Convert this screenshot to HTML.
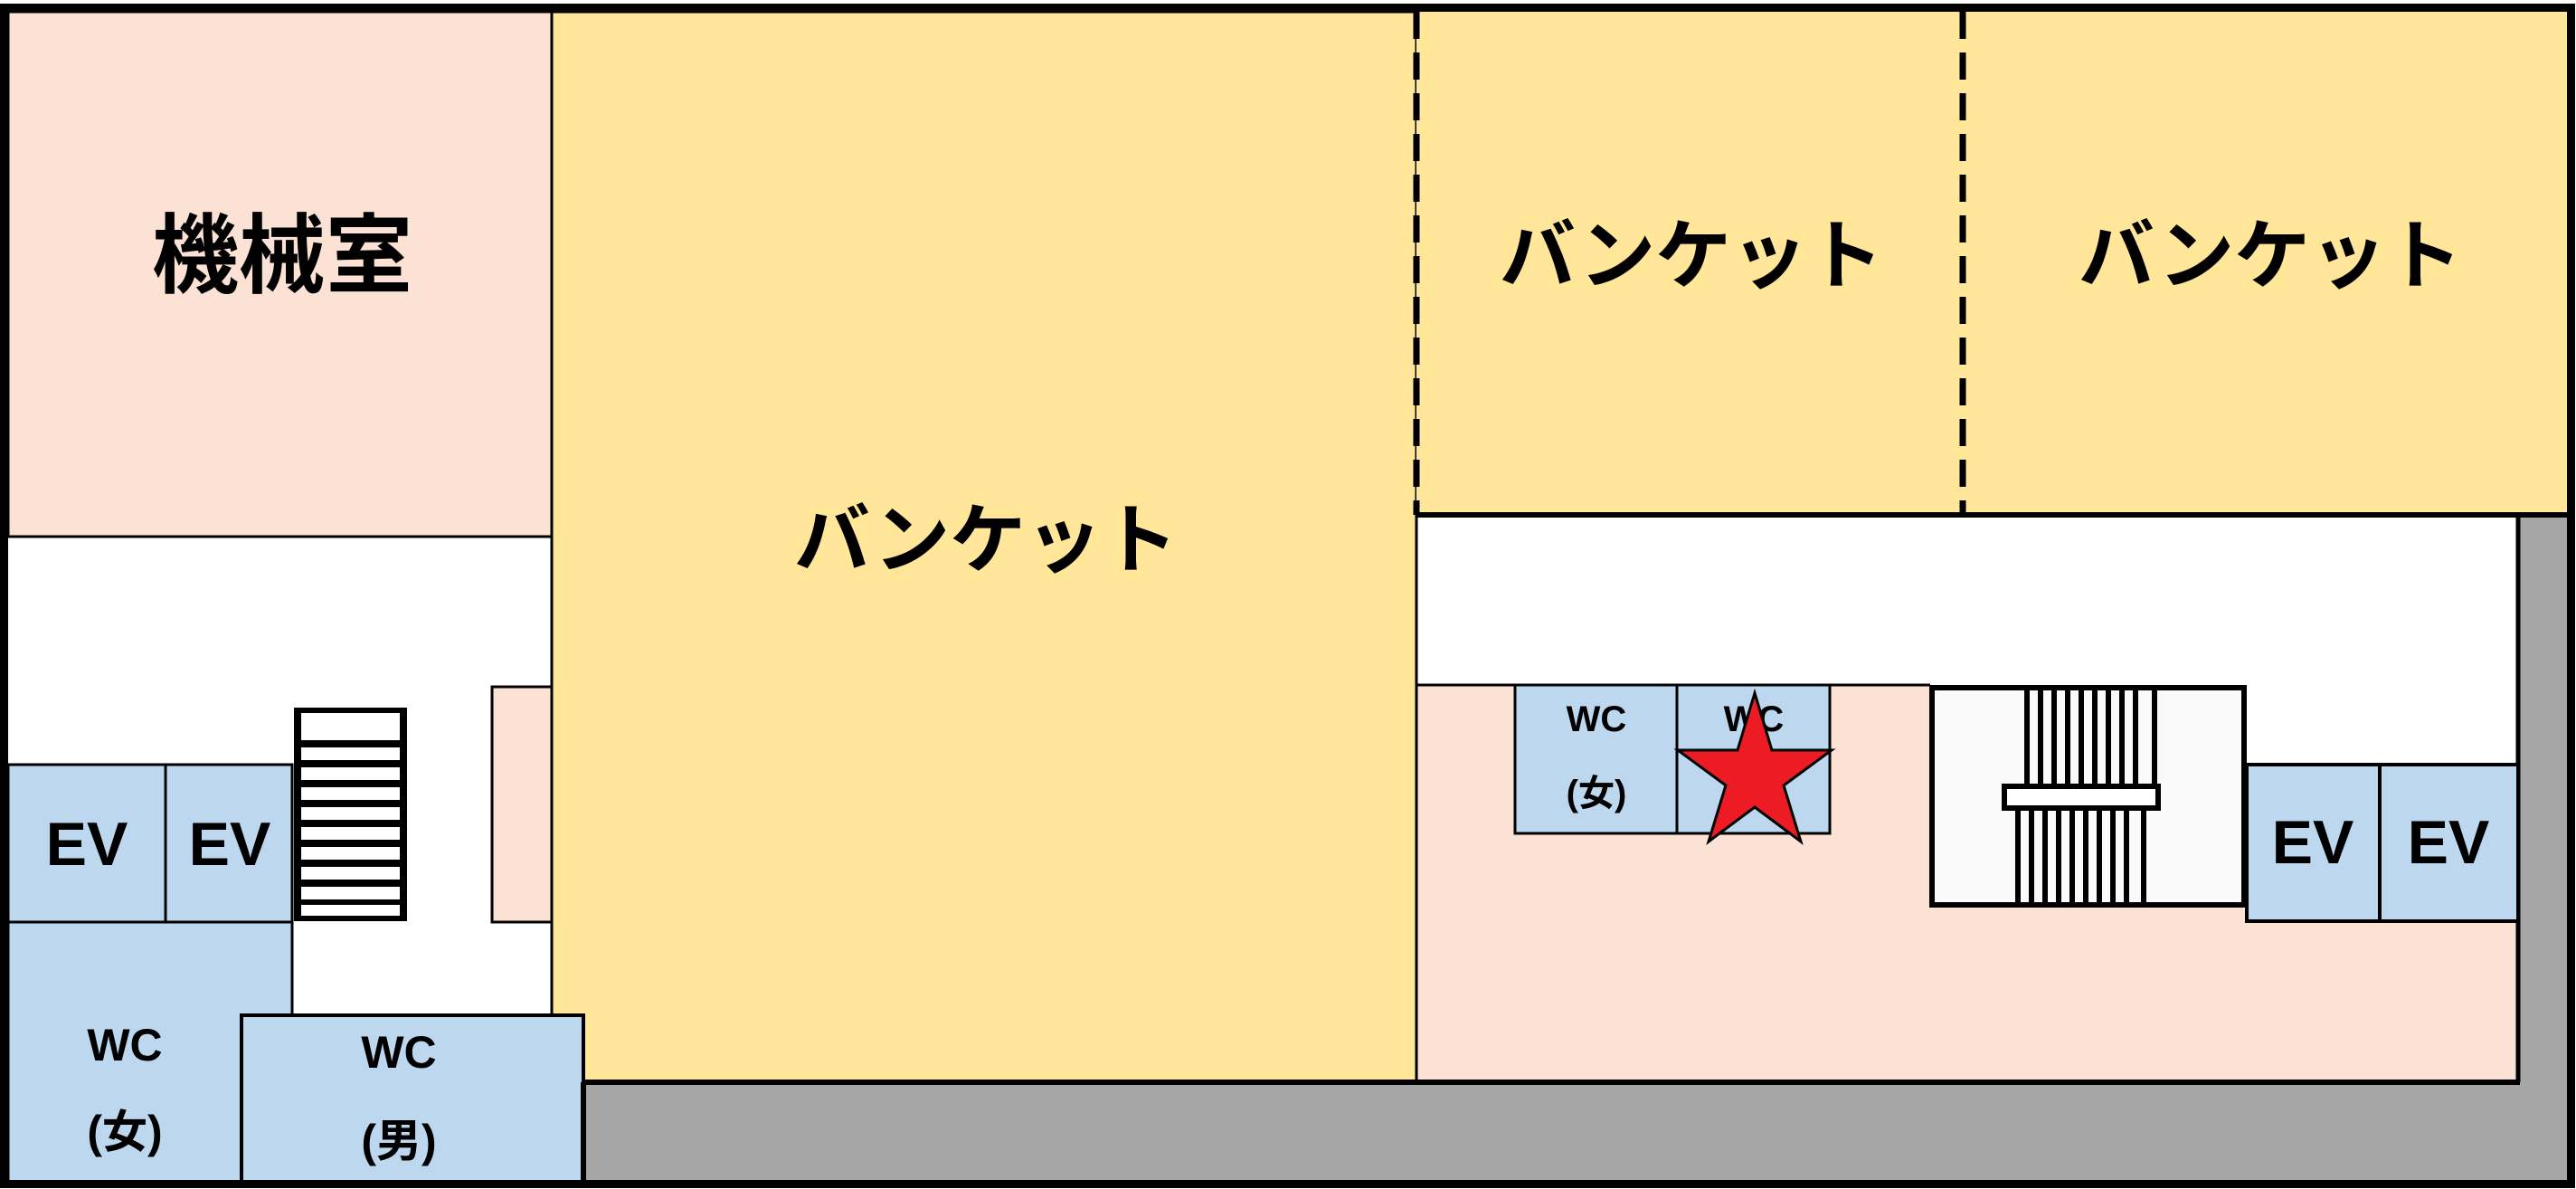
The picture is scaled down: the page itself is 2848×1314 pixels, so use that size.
<!DOCTYPE html>
<html><head><meta charset="utf-8"><style>
html,body{margin:0;padding:0;background:#fff;}
svg{display:block}
text{font-family:"Liberation Sans","Noto Sans CJK JP",sans-serif;font-weight:bold;fill:#000;text-anchor:middle}
</style></head><body>
<svg width="2848" height="1314" viewBox="0 0 2848 1314" xmlns="http://www.w3.org/2000/svg">
<rect x="0" y="0" width="2848" height="1314" fill="#fff"/>
<rect x="645" y="1196" width="2200" height="112" fill="#a6a6a6"/>
<rect x="2784" y="569" width="60" height="740" fill="#a6a6a6"/>
<rect x="9" y="13" width="601" height="580" fill="#fbe2d5" stroke="#000" stroke-width="3"/>
<rect x="610" y="13" width="956" height="1183" fill="#ffe699" stroke="#000" stroke-width="3"/>
<rect x="1566" y="13" width="1274" height="556" fill="#ffe699"/>
<line x1="1566" y1="569" x2="2840" y2="569" stroke="#000" stroke-width="6"/>
<line x1="1566" y1="13" x2="1566" y2="569" stroke="#000" stroke-width="7" stroke-dasharray="30,15"/>
<line x1="2170" y1="13" x2="2170" y2="569" stroke="#000" stroke-width="7" stroke-dasharray="30,15"/>
<!-- right pink -->
<rect x="1566" y="757" width="568" height="439" fill="#fbe2d5"/>
<rect x="2134" y="1000" width="650" height="196" fill="#fbe2d5"/>
<rect x="2134" y="757" width="350" height="243" fill="#fbe2d5"/>
<line x1="1566" y1="757" x2="2134" y2="757" stroke="#000" stroke-width="3"/>
<line x1="2784" y1="569" x2="2784" y2="1196" stroke="#000" stroke-width="5"/>
<line x1="645" y1="1196" x2="2786" y2="1196" stroke="#000" stroke-width="6"/>
<line x1="1566" y1="569" x2="1566" y2="1196" stroke="#000" stroke-width="3"/>
<rect x="1675" y="757" width="179" height="164" fill="#bdd7ee" stroke="#000" stroke-width="3"/>
<rect x="1854" y="757" width="169" height="164" fill="#bdd7ee" stroke="#000" stroke-width="3"/>
<text x="1765" y="808" font-size="40">WC</text>
<text x="1765" y="890" font-size="40">(女)</text>
<text x="1939" y="808" font-size="40">WC</text>
<polygon points="1940,766 1959,829 2025,829 1972,868 1991,930 1940,892 1889,930 1908,868 1855,829 1921,829" fill="#ed1c24" stroke="#000" stroke-width="3"/>
<rect x="2136" y="760" width="345" height="240" fill="#fafafa" stroke="#000" stroke-width="6"/>
<g stroke="#000" stroke-width="6">
<line x1="2241" y1="760" x2="2241" y2="868"/><line x1="2256" y1="760" x2="2256" y2="868"/><line x1="2271" y1="760" x2="2271" y2="868"/><line x1="2286" y1="760" x2="2286" y2="868"/><line x1="2301" y1="760" x2="2301" y2="868"/><line x1="2316" y1="760" x2="2316" y2="868"/><line x1="2331" y1="760" x2="2331" y2="868"/><line x1="2346" y1="760" x2="2346" y2="868"/><line x1="2361" y1="760" x2="2361" y2="868"/><line x1="2382" y1="760" x2="2382" y2="868"/>
<line x1="2231" y1="895" x2="2231" y2="1000"/><line x1="2246" y1="895" x2="2246" y2="1000"/><line x1="2261" y1="895" x2="2261" y2="1000"/><line x1="2276" y1="895" x2="2276" y2="1000"/><line x1="2291" y1="895" x2="2291" y2="1000"/><line x1="2306" y1="895" x2="2306" y2="1000"/><line x1="2321" y1="895" x2="2321" y2="1000"/><line x1="2336" y1="895" x2="2336" y2="1000"/><line x1="2351" y1="895" x2="2351" y2="1000"/><line x1="2370" y1="895" x2="2370" y2="1000"/>
</g>
<rect x="2216" y="869" width="170" height="24" fill="#fff" stroke="#000" stroke-width="6"/>
<rect x="2484" y="845" width="147" height="173" fill="#bdd7ee" stroke="#000" stroke-width="4"/>
<rect x="2631" y="845" width="153" height="173" fill="#bdd7ee" stroke="#000" stroke-width="4"/>
<text x="2557" y="954" font-size="68">EV</text>
<text x="2707" y="954" font-size="68">EV</text>
<rect x="544" y="759" width="66" height="260" fill="#fbe2d5" stroke="#000" stroke-width="3"/>
<rect x="9" y="845" width="174" height="174" fill="#bdd7ee" stroke="#000" stroke-width="3"/>
<rect x="183" y="845" width="140" height="174" fill="#bdd7ee" stroke="#000" stroke-width="3"/>
<text x="96" y="956" font-size="68">EV</text>
<text x="254" y="956" font-size="68">EV</text>
<rect x="325" y="782" width="125" height="236" fill="#000"/>
<g fill="#fff">
<rect x="333" y="788" width="109" height="30"/>
<rect x="333" y="826" width="109" height="14"/><rect x="333" y="848" width="109" height="14"/><rect x="333" y="870" width="109" height="14"/><rect x="333" y="892" width="109" height="14"/><rect x="333" y="914" width="109" height="14"/><rect x="333" y="936" width="109" height="14"/><rect x="333" y="958" width="109" height="14"/><rect x="333" y="980" width="109" height="14"/><rect x="333" y="1000" width="109" height="12"/>
</g>
<rect x="9" y="1019" width="314" height="288" fill="#bdd7ee" stroke="#000" stroke-width="3"/>
<rect x="267" y="1122" width="378" height="185" fill="#bdd7ee" stroke="#000" stroke-width="4"/>
<text x="138" y="1172" font-size="50">WC</text>
<text x="138" y="1268" font-size="50">(女)</text>
<text x="441" y="1180" font-size="50">WC</text>
<text x="441" y="1278" font-size="50">(男)</text>
<line x1="645" y1="1196" x2="645" y2="1310" stroke="#000" stroke-width="6"/>
<text x="312" y="316" font-size="96">機械室</text>
<text x="1090" y="626" font-size="84">バンケット</text>
<text x="1870" y="312" font-size="84">バンケット</text>
<text x="2510" y="312" font-size="84">バンケット</text>
<rect x="4.5" y="8.5" width="2838" height="1300" fill="none" stroke="#000" stroke-width="9"/>
</svg>
</body></html>
